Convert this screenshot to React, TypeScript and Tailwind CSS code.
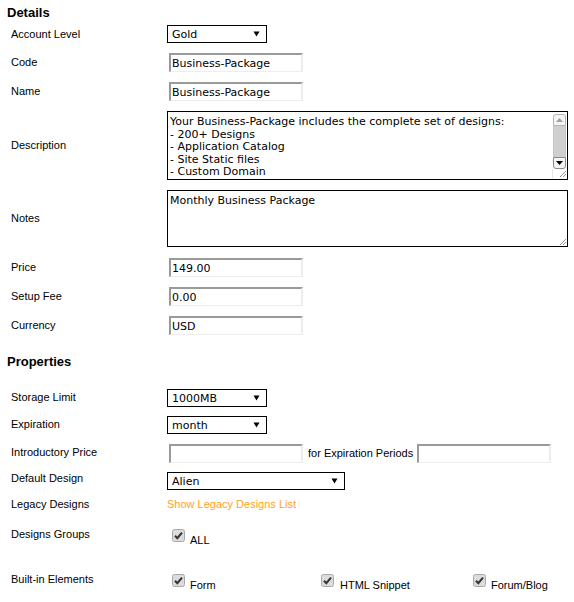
import React from "react";

const LABEL = "w-[167px] shrink-0 pl-[11px] text-[11px] leading-[13px] text-black";
const VFONT = { fontFamily: '"DejaVu Sans", Verdana, sans-serif' };

function Arrow() {
  return (
    <svg width="7" height="6" viewBox="0 0 7 6" className="shrink-0">
      <path d="M0.5 0.5 L6.5 0.5 L3.5 5.5 Z" fill="#000" />
    </svg>
  );
}

function Select({ value, w }: { value: string; w: string }) {
  return (
    <div
      className={`${w} h-[18px] border border-black bg-white flex items-center justify-between pl-[4px] pr-[6px] text-[11px] text-black`}
      style={VFONT}
    >
      <span className="leading-[13px] mt-[1px]">{value}</span>
      <Arrow />
    </div>
  );
}

function Input({ value = "", ml = "ml-[2px]" }: { value?: string; ml?: string }) {
  return (
    <div
      className={`${ml} w-[134px] h-[19px] border-t-2 border-l-2 border-b border-r-2 border-t-[#9a9a9a] border-l-[#9a9a9a] border-b-[#ededed] border-r-[#ededed] bg-white flex items-center pl-[1px] text-[11px] text-black`}
      style={VFONT}
    >
      <span className="leading-[13px]">{value}</span>
    </div>
  );
}

function Check() {
  return (
    <svg width="13" height="13" viewBox="0 0 13 13" className="shrink-0">
      <rect x="0.5" y="0.5" width="12" height="12" rx="2" fill="#dcdcdc" stroke="#a8a8a8" />
      <path d="M3 6.8 L5.3 9.2 L10 3.6" fill="none" stroke="#333" strokeWidth="2" />
    </svg>
  );
}

function Grip() {
  return (
    <svg width="9" height="9" viewBox="0 0 9 9">
      <path d="M8 2 L2 8 M8 5 L5 8" stroke="#9a9a9a" strokeWidth="1" />
    </svg>
  );
}

function Scrollbar() {
  return (
    <div className="w-[15px] shrink-0 flex flex-col pt-[2px] pb-[1px]">
      <div className="h-[12px] mx-[1px] border border-[#b4b4b4] rounded-t-[3px] bg-[#f4f4f4] flex items-center justify-center">
        <svg width="7" height="4" viewBox="0 0 7 4">
          <path d="M0 4 L3.5 0 L7 4 Z" fill="#a0a0a0" />
        </svg>
      </div>
      <div className="h-[31px] mx-[1px] bg-[#cfcfcf] border-x border-[#c4c4c4]" />
      <div className="h-[12px] mx-[1px] border border-[#8a8a8a] rounded-b-[3px] bg-[#f4f4f4] flex items-center justify-center">
        <svg width="7" height="4" viewBox="0 0 7 4">
          <path d="M0 0 L7 0 L3.5 4 Z" fill="#000" />
        </svg>
      </div>
      <div className="flex-1 border-l border-[#e6e6e6] flex items-end justify-end">
        <Grip />
      </div>
    </div>
  );
}

function Row({
  label,
  className,
  labelClass = "",
  children,
}: {
  label: string;
  className: string;
  labelClass?: string;
  children?: React.ReactNode;
}) {
  return (
    <div className={`flex items-center ${className}`}>
      <div className={`${LABEL} ${labelClass}`}>{label}</div>
      {children}
    </div>
  );
}

export default function App() {
  return (
    <div
      className="w-[574px] h-[602px] bg-white overflow-hidden text-black"
      style={{ fontFamily: '"Liberation Sans", Arial, sans-serif' }}
    >
      <div className="h-[25px] flex items-center pl-[7px] text-[13px] font-bold">Details</div>
      <Row label="Account Level" className="h-[18px]">
        <Select value="Gold" w="w-[100px]" />
      </Row>
      <Row label="Code" className="h-[19px] mt-[10px]">
        <Input value="Business-Package" />
      </Row>
      <Row label="Name" className="h-[19px] mt-[10px]">
        <Input value="Business-Package" />
      </Row>
      <Row label="Description" className="h-[69px] mt-[10px]">
        <div className="w-[401px] h-[69px] border border-black bg-white flex" style={VFONT}>
          <div className="flex-1 overflow-hidden pl-[2px] pt-[4px] text-[11px] leading-[12.6px] text-black">
            Your Business-Package includes the complete set of designs:
            <br />- 200+ Designs
            <br />- Application Catalog
            <br />- Site Static files
            <br />- Custom Domain
          </div>
          <Scrollbar />
        </div>
      </Row>
      <Row label="Notes" className="h-[57px] mt-[10px]">
        <div className="w-[401px] h-[57px] border border-black bg-white flex" style={VFONT}>
          <div className="flex-1 overflow-hidden pl-[2px] pt-[4px] text-[11px] leading-[12.6px] text-black">
            Monthly Business Package
          </div>
          <div className="w-[10px] flex items-end justify-end">
            <Grip />
          </div>
        </div>
      </Row>
      <Row label="Price" className="h-[19px] mt-[11px]">
        <Input value="149.00" />
      </Row>
      <Row label="Setup Fee" className="h-[19px] mt-[10px]">
        <Input value="0.00" />
      </Row>
      <Row label="Currency" className="h-[19px] mt-[10px]">
        <Input value="USD" />
      </Row>
      <div className="h-[20px] mt-[17px] flex items-center pl-[7px] text-[13px] font-bold">Properties</div>
      <Row label="Storage Limit" className="h-[18px] mt-[17px]" labelClass="mb-[1px]">
        <Select value="1000MB" w="w-[100px]" />
      </Row>
      <Row label="Expiration" className="h-[18px] mt-[9px]" labelClass="mb-[2px]">
        <Select value="month" w="w-[100px]" />
      </Row>
      <Row label="Introductory Price" className="h-[18px] mt-[10px]" labelClass="mb-[2px]">
        <Input />
        <span className="ml-[5px] text-[11px] leading-[13px]">for Expiration Periods</span>
        <Input ml="ml-[4px]" />
      </Row>
      <Row label="Default Design" className="h-[18px] mt-[10px]" labelClass="mb-[6px]">
        <Select value="Alien" w="w-[178px]" />
      </Row>
      <Row label="Legacy Designs" className="h-[16px] mt-[7px]" labelClass="mb-[2px]">
        <span className="text-[11px] leading-[13px] text-[#ffa21f] mb-[2px]">Show Legacy Designs List</span>
      </Row>
      <div className="flex items-start mt-[19px]">
        <div className={`${LABEL} mt-[-4px]`}>Designs Groups</div>
        <div className="flex items-start pl-[5px] mt-[-3px]">
          <Check />
          <span className="ml-[5px] mt-[5px] text-[11px] leading-[13px]">ALL</span>
        </div>
      </div>
      <div className="flex items-start mt-[29px]">
        <div className={`${LABEL} mt-[-3px]`}>Built-in Elements</div>
        <div className="flex items-start mt-[-2px]">
          <div className="w-[150px] flex items-start pl-[5px]">
            <Check />
            <span className="ml-[5px] mt-[5px] text-[11px] leading-[13px]">Form</span>
          </div>
          <div className="w-[151px] flex items-start pl-[4px]">
            <Check />
            <span className="ml-[6px] mt-[5px] text-[11px] leading-[13px]">HTML Snippet</span>
          </div>
          <div className="flex items-start pl-[5px]">
            <Check />
            <span className="ml-[5px] mt-[5px] text-[11px] leading-[13px]">Forum/Blog</span>
          </div>
        </div>
      </div>
    </div>
  );
}
